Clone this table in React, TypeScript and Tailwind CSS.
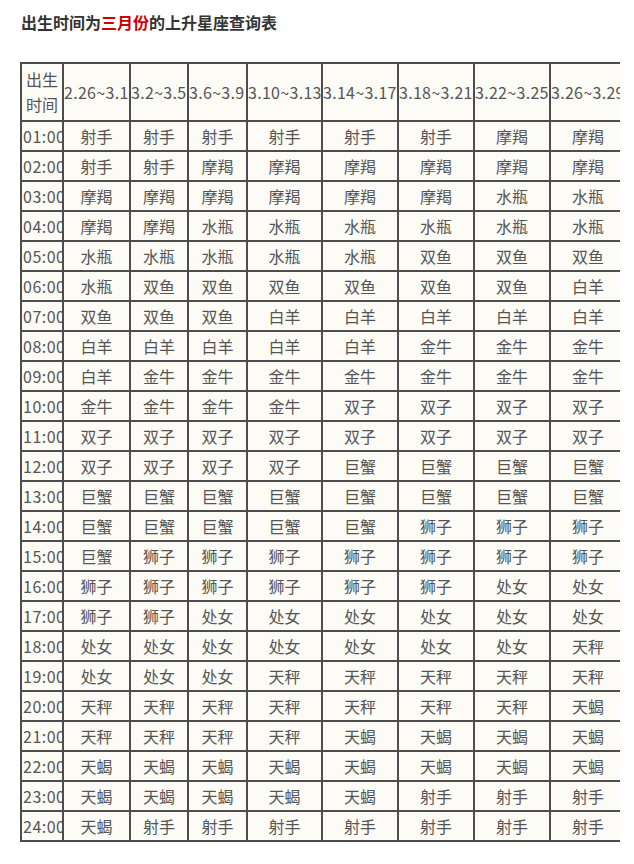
const dates = ["2.26~3.1", "3.2~3.5", "3.6~3.9", "3.10~3.13", "3.14~3.17", "3.18~3.21", "3.22~3.25", "3.26~3.29"]

const rows: string[][] = [
  ["射手", "射手", "射手", "射手", "射手", "射手", "摩羯", "摩羯"],
  ["射手", "射手", "摩羯", "摩羯", "摩羯", "摩羯", "摩羯", "摩羯"],
  ["摩羯", "摩羯", "摩羯", "摩羯", "摩羯", "摩羯", "水瓶", "水瓶"],
  ["摩羯", "摩羯", "水瓶", "水瓶", "水瓶", "水瓶", "水瓶", "水瓶"],
  ["水瓶", "水瓶", "水瓶", "水瓶", "水瓶", "双鱼", "双鱼", "双鱼"],
  ["水瓶", "双鱼", "双鱼", "双鱼", "双鱼", "双鱼", "双鱼", "白羊"],
  ["双鱼", "双鱼", "双鱼", "白羊", "白羊", "白羊", "白羊", "白羊"],
  ["白羊", "白羊", "白羊", "白羊", "白羊", "金牛", "金牛", "金牛"],
  ["白羊", "金牛", "金牛", "金牛", "金牛", "金牛", "金牛", "金牛"],
  ["金牛", "金牛", "金牛", "金牛", "双子", "双子", "双子", "双子"],
  ["双子", "双子", "双子", "双子", "双子", "双子", "双子", "双子"],
  ["双子", "双子", "双子", "双子", "巨蟹", "巨蟹", "巨蟹", "巨蟹"],
  ["巨蟹", "巨蟹", "巨蟹", "巨蟹", "巨蟹", "巨蟹", "巨蟹", "巨蟹"],
  ["巨蟹", "巨蟹", "巨蟹", "巨蟹", "巨蟹", "狮子", "狮子", "狮子"],
  ["巨蟹", "狮子", "狮子", "狮子", "狮子", "狮子", "狮子", "狮子"],
  ["狮子", "狮子", "狮子", "狮子", "狮子", "狮子", "处女", "处女"],
  ["狮子", "狮子", "处女", "处女", "处女", "处女", "处女", "处女"],
  ["处女", "处女", "处女", "处女", "处女", "处女", "处女", "天秤"],
  ["处女", "处女", "处女", "天秤", "天秤", "天秤", "天秤", "天秤"],
  ["天秤", "天秤", "天秤", "天秤", "天秤", "天秤", "天秤", "天蝎"],
  ["天秤", "天秤", "天秤", "天秤", "天蝎", "天蝎", "天蝎", "天蝎"],
  ["天蝎", "天蝎", "天蝎", "天蝎", "天蝎", "天蝎", "天蝎", "天蝎"],
  ["天蝎", "天蝎", "天蝎", "天蝎", "天蝎", "射手", "射手", "射手"],
  ["天蝎", "射手", "射手", "射手", "射手", "射手", "射手", "射手"],
]

const colWidths = ["w-[42px]", "w-[67px]", "w-[58px]", "w-[59px]", "w-[75px]", "w-[76px]", "w-[76px]", "w-[76px]", "w-[76px]"]

const cell = "border-2 border-[#4d4d4d] bg-[#fdfbf5] overflow-hidden whitespace-nowrap p-0"

export default function App() {
  return (
    <div className="min-h-screen bg-white text-[16px] text-[#555]" style={{ fontFamily: '"Noto Sans CJK SC", "Microsoft YaHei", sans-serif' }}>
      <h1 className="pl-[21px] pt-[10px] text-[16px] font-bold leading-6 text-[#333]">
        出生时间为<span className="text-[#cc0000]">三月份</span>的上升星座查询表
      </h1>
      <div className="ml-[20px] mt-[28px] w-[600px] overflow-hidden">
        <table className="table-fixed border-collapse w-[607px]">
          <colgroup>
            {colWidths.map((w, i) => (
              <col key={i} className={w} />
            ))}
          </colgroup>
          <thead>
            <tr className="h-[58px]">
              <th className={`${cell} text-center font-normal leading-[25px] whitespace-normal`}>
                出生<br />时间
              </th>
              {dates.map((d) => (
                <th key={d} className={`${cell} text-left font-normal tracking-[0.3px]`}>
                  {d}
                </th>
              ))}
            </tr>
          </thead>
          <tbody>
            {rows.map((r, i) => (
              <tr key={i} className="h-[30px]">
                <td className={`${cell} text-left pl-px tracking-[0.5px]`}>
                  {String(i + 1).padStart(2, "0")}:00
                </td>
                {r.map((s, j) => (
                  <td key={j} className={`${cell} text-center`}>
                    {s}
                  </td>
                ))}
              </tr>
            ))}
          </tbody>
        </table>
      </div>
    </div>
  )
}
